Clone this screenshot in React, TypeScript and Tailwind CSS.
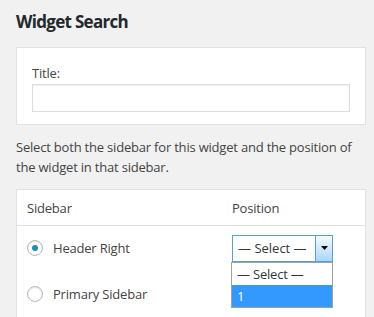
import React from "react";

export default function App() {
  return (
    <div className="w-[374px] h-[317px] overflow-hidden bg-[#f1f1f1] text-[#444] text-[13px] leading-[20px] tracking-[-0.2px]" style={{ fontFamily: '"Open Sans", "Noto Sans", sans-serif' }}>
      <div className="pl-4 pr-2 pt-[11px]">
        <h2 className="text-[17px] leading-[22px] font-bold text-[#23282d] tracking-[-0.7px]">Widget Search</h2>
        <div className="mt-[14px] bg-white border border-[#e2e2e2] pl-[15px] pr-[15px] pt-[17px] pb-[12px]">
          <div className="leading-[16px] mb-[3px]">Title:</div>
          <div className="h-[28px] border border-[#ddd] bg-white shadow-[inset_0_1px_2px_rgba(0,0,0,0.07)]"></div>
        </div>
        <p className="mt-[12px] leading-[20px]">
          Select both the sidebar for this widget and the position of the widget in that sidebar.
        </p>
        <div className="mt-[12px] bg-white border border-[#e2e2e2] h-[200px]">
          <div className="flex h-[36px] items-center border-b border-[#e2e2e2]">
            <div className="pl-[10px] w-[215px]">Sidebar</div>
            <div>Position</div>
          </div>
          <div className="flex h-[44px] items-center">
            <div className="pl-[10px] w-[215px] flex items-center gap-[10px]">
              <span className="w-[16px] h-[16px] rounded-full border border-[#b4b9be] bg-white flex items-center justify-center shadow-[inset_0_1px_2px_rgba(0,0,0,0.1)]">
                <span className="w-[6px] h-[6px] rounded-full bg-[#1e8cbe]"></span>
              </span>
              <span>Header Right</span>
            </div>
            <div className="relative">
              <div className="w-[101px] h-[27px] border border-[#5b9dd9] flex">
                <div className="flex-1 flex items-center pl-[5px] text-[#32373c] tracking-normal">— Select —</div>
                <div className="w-[17px] border-l border-[#5b9dd9] bg-gradient-to-b from-[#f4faff] to-[#a9d8f7] flex justify-center pt-[10px]">
                  <svg width="7" height="4" viewBox="0 0 7 4"><path d="M0 0h7L3.5 4z" fill="#000" /></svg>
                </div>
              </div>
              <div className="absolute left-[-1px] top-[27px] w-[102px] border border-[#a0a0a0] bg-white">
                <div className="h-[22px] flex items-center pl-[5px] text-[#32373c]">— Select —</div>
                <div className="h-[22px] flex items-center pl-[5px] bg-[#3399ff] text-white">1</div>
              </div>
            </div>
          </div>
          <div className="flex h-[48px] items-center">
            <div className="pl-[10px] w-[215px] flex items-center gap-[10px]">
              <span className="w-[16px] h-[16px] rounded-full border border-[#b4b9be] bg-white shadow-[inset_0_1px_2px_rgba(0,0,0,0.1)]"></span>
              <span>Primary Sidebar</span>
            </div>
          </div>
        </div>
      </div>
    </div>
  );
}
